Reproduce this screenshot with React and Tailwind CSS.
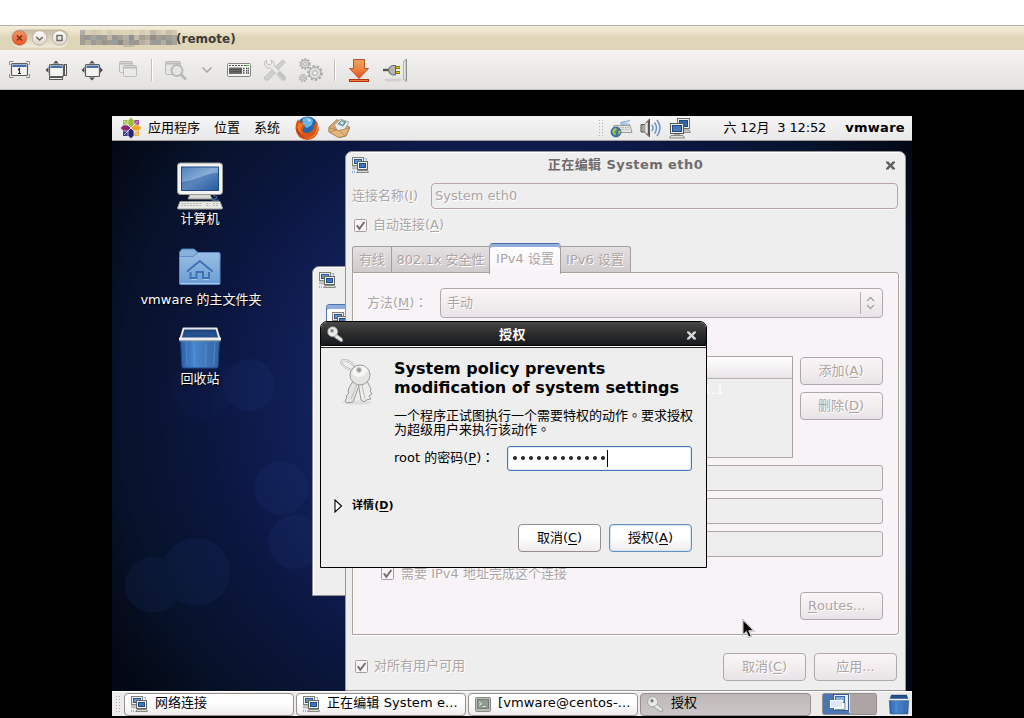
import React from "react";

const U = ({ children }) => (
  <span className="underline decoration-1 underline-offset-2">{children}</span>
);

/* full-width punctuation centred in its cell */
const P = ({ children }) => <span className="leading-none [font-family:'Noto_Sans_CJK_TC',sans-serif]">{children}</span>;

/* ---------- small icons ---------- */

const NetIcon = ({ className = "" }) => (
  <svg width="17" height="17" viewBox="0 0 17 17" className={`shrink-0 ${className}`}>
    <rect x="0.5" y="0.5" width="11" height="8" fill="#eeeeec" stroke="#7e807c" />
    <rect x="2.5" y="2.5" width="7" height="4" fill="#6b95d0" stroke="#2b5490" />
    <path d="M1 9h5v3H0v-1z" fill="#c5c6c0" stroke="#9c9e99" strokeWidth=".5" />
    <path d="M12.500 1.500h2v2M.5 14v2M2.500 14v2M4.500 15v1" stroke="#8fb1e2" fill="none" />
    <rect x="5.5" y="4.5" width="10" height="8" fill="#f1f1ef" stroke="#636561" />
    <rect x="7.5" y="6.5" width="6" height="4" fill="#4377bd" stroke="#204a87" />
    <path d="M6 13.500h9.500l1 2H5z" fill="#d3d7cf" stroke="#8a8c87" />
  </svg>
);

const KeyIcon = ({ className = "" }) => (
  <svg width="17" height="17" viewBox="0 0 17 17" className={`shrink-0 ${className}`}>
    <path d="M9 7.800l6.300 4.700.5 2.700-2.200.6-.8-1.200-1.600-.2-.4-1.400-1.300-.1-3-2.600z" fill="#e8e8e6" stroke="#8d8d8a" strokeWidth=".7" />
    <circle cx="5.7" cy="5.800" r="5" fill="#e9e9e7" stroke="#999996" strokeWidth=".8" />
    <circle cx="5" cy="4.800" r="1.700" fill="#777775" stroke="#bdbdba" strokeWidth=".6" />
  </svg>
);

const CloseX = ({ color, className = "" }) => (
  <svg width="9" height="9" viewBox="0 0 9 9" className={`shrink-0 ${className}`}>
    <path d="M0 .5h2.4L4.5 2.9 6.6.5H9v1.2L6.3 4.5 9 7.3v1.2H6.6L4.5 6.1 2.4 8.5H0V7.3l2.7-2.8L0 1.7z" fill={color} />
  </svg>
);

const Check = ({ className = "" }) => (
  <svg width="13" height="13" viewBox="0 0 13 13" className={`shrink-0 ${className}`}>
    <rect x=".5" y=".5" width="12" height="12" rx="1" fill="#f8f4f7" stroke="#a79c9f" />
    <path d="M2.8 6.3l2.5 3.6L10.4 3" stroke="#77706f" strokeWidth="2" fill="none" />
  </svg>
);

const TerminalIcon = () => (
  <svg width="16" height="15" viewBox="0 0 16 15" className="shrink-0">
    <rect x=".5" y=".5" width="15" height="14" rx="1" fill="#babdb6" stroke="#888a85" />
    <rect x="2.5" y="2.5" width="11" height="9" fill="#8f9a91" stroke="#747d76" />
    <path d="M4.2 5l2.4 1.700-2.400 1.700" stroke="#eeeeec" fill="none" />
    <path d="M7.500 9.500h3.500" stroke="#cfe3cf" />
  </svg>
);

const TrashIcon = ({ size }) => (
  <svg width={size} height={size} viewBox="0 0 44 44" className="shrink-0">
    <defs>
      <linearGradient id="tb" x1="0" x2="1"><stop offset="0" stopColor="#2a5fa8" /><stop offset=".35" stopColor="#4686cf" /><stop offset="1" stopColor="#3465a4" /></linearGradient>
    </defs>
    <path d="M2.500 13h39L40 40.500q0 1.500-2 1.500H6q-2 0-2-1.500z" fill="url(#tb)" stroke="#234c87" />
    <path d="M8 16l1 23M16 17l.3 23M28 17l-.3 23M37 16l-1.500 23" stroke="#699fdc" strokeWidth="1" opacity=".55" />
    <path d="M5.500 2.500h33l3 10.500h-39z" fill="#20467d" stroke="#e8e8e6" strokeWidth="2" strokeLinejoin="round" />
    <path d="M5 12.500L7.500 6h29l2.500 6.500z" fill="#24508d" />
    <path d="M1 13h42" stroke="#eeeeec" strokeWidth="3" />
    <path d="M1 15h42" stroke="#90928f" strokeWidth=".8" />
  </svg>
);

/* ---------- desktop icons ---------- */

const ComputerIcon = () => (
  <svg width="48" height="48" viewBox="0 0 48 48">
    <defs>
      <linearGradient id="scr" x1="0" y1="0" x2="1" y2="1"><stop offset="0" stopColor="#5080bd" /><stop offset=".5" stopColor="#8aaed6" /><stop offset="1" stopColor="#2a60a5" /></linearGradient>
    </defs>
    <path d="M37 34c5-1 5 3 1 3s-1 3 5 1" fill="none" stroke="#3a6094" strokeWidth="1.400" />
    <path d="M14 32h20l2 5H12z" fill="#d7d8d4" stroke="#8a8c87" />
    <rect x="1.500" y="1" width="45" height="31.500" rx="3" fill="#f2f2f0" stroke="#9a9c97" />
    <rect x="5.500" y="5" width="37" height="23.500" fill="url(#scr)" stroke="#204a87" />
    <path d="M6 20c16-2 20-8 36-9v17H6z" fill="#1f559b" opacity=".45" />
    <path d="M4 39.500h40l2.500 6.500q0 1-1 1h-43q-1 0-1-1z" fill="#e8e8e4" stroke="#9a9c97" />
    <path d="M5.500 41.500h21M5 43.500h21M30 41.500h4M37 41.500h6M30 43.500h4M37 43.500h6" stroke="#b4b6b1" strokeDasharray="2 1" />
  </svg>
);

const HomeFolderIcon = () => (
  <svg width="42" height="38" viewBox="0 0 42 38">
    <defs>
      <linearGradient id="fo" x1="0" y1="0" x2="0" y2="1"><stop offset="0" stopColor="#9bbfe6" /><stop offset="1" stopColor="#6a9dd3" /></linearGradient>
    </defs>
    <path d="M.5 9V4L3 1h12l4.500 4h19.500q2 0 2 2v5H.5z" fill="#8ab1de" stroke="#4b7ebb" />
    <path d="M.5 9.500q0-1 1-1H14l5-4h20.500q1.500 0 1.500 1V35.500q0 1-1 1h-38.500q-1 0-1-1z" fill="url(#fo)" stroke="#5a8cc8" />
    <path d="M1.500 35.500h39" stroke="#a9c8ea" />
    <path d="M8 23.500L20.800 13 33.600 23.500M11.500 24v6h6v-6h6.500v6h6V24" fill="none" stroke="#3f73b4" strokeWidth="2" />
    <path d="M12.500 31.500h5.500M24 31.500h6" stroke="#a9c8ea" />
  </svg>
);

const DesktopItem = ({ children, label, className = "" }) => (
  <div className={`flex w-[176px] flex-col items-center ${className}`}>
    {children}
    <div className="whitespace-nowrap text-[13px] leading-[18px] text-white [text-shadow:1px_1px_1px_#000]">{label}</div>
  </div>
);

/* ---------- top panel icons ---------- */

const CentosIcon = () => (
  <svg width="22" height="22" viewBox="0 0 22 22" className="shrink-0">
    <rect x="3" y="3" width="7.500" height="7.500" fill="#a3c34a" />
    <rect x="11.500" y="3" width="7.500" height="7.500" fill="#a24a93" />
    <rect x="3" y="11.500" width="7.500" height="7.500" fill="#3b3a8c" />
    <rect x="11.500" y="11.500" width="7.500" height="7.500" fill="#eeb04a" />
    <g stroke="#f4f4f4" strokeWidth=".7">
      <path d="M11 .3l3 3V8l-3 3-3-3V3.300z" fill="#9bbf2f" />
      <path d="M21.700 11l-3 3H14l-3-3 3-3h4.700z" fill="#efa724" />
      <path d="M11 21.700l-3-3V14l3-3 3 3v4.700z" fill="#262577" />
      <path d="M.3 11l3-3H8l3 3-3 3H3.300z" fill="#932279" />
    </g>
    <path d="M4 4l14 14M18 4L4 18" stroke="#f4f4f4" strokeWidth=".7" />
  </svg>
);

const FirefoxIcon = () => (
  <svg width="24" height="24" viewBox="0 0 24 24" className="shrink-0">
    <circle cx="12.500" cy="11" r="10.500" fill="#2567ad" />
    <path d="M8 2q6-2 10 2l-1 5-5 3-5-3z" fill="#67b6e8" />
    <path d="M12 2l4 2-2 2z" fill="#c9e7fa" />
    <path d="M20.500 4q4 5 3 10.500-2 9-11.500 9.500Q1.500 23 .5 12.500.3 7 3 3.200L4.500 6q2-1 4-.2L7 8l3.500 1.500-2.200 2-.6 3.200q2 3.300 6 2 4.500-2 5-5 .5-2-.3-3.500l1.800 1.300q.8-2.500.3-5.500z" fill="#d9541a" />
    <path d="M21.500 6q2.500 5 .2 10-3 6.500-10 6.500 8-2 9.800-8 1-4 0-8.500z" fill="#f8a52b" />
    <path d="M2.500 12q1 7 7.500 9.500Q3 20 1.500 13z" fill="#a82a16" />
    <path d="M3.500 7l4.500 1.500-2 3q-1 4 2 6.500-5-2-5.500-6z" fill="#ee7a22" />
  </svg>
);

const MailIcon = () => (
  <svg width="23" height="20" viewBox="0 0 23 20" className="shrink-0">
    <path d="M1 9l8-7.500 13 8-4 8.500-7 1.500L1 14z" fill="#d7a66a" stroke="#96703d" strokeWidth=".8" />
    <path d="M6.500 7l6-6 8.500 3-4.500 8-7 1z" fill="#e6ecef" stroke="#999" strokeWidth=".8" />
    <path d="M10 6l3.500-3.500 4.500 1.500-3 4z" fill="#7faccc" stroke="#557891" strokeWidth=".8" />
    <circle cx="14" cy="5" r="1.400" fill="#e6efb1" />
    <path d="M1 10l10 2.500 10.500-2.500-4 8-7 1.500L1 14z" fill="#e2b77d" stroke="#ac834d" strokeWidth=".8" />
    <path d="M1.500 14l7-2M17 17.500L11.500 13" stroke="#ac834d" strokeWidth=".8" />
  </svg>
);

const ImeIcon = () => (
  <svg width="23" height="20" viewBox="0 0 23 20" className="shrink-0">
    <path d="M20 7c-1-3-10 1-9-2 0-2 6 0 9-3" fill="none" stroke="#8fb4dc" strokeWidth="1.500" />
    <path d="M4 7.500h16l2 7H2z" fill="#e4e5e1" stroke="#9a9c97" />
    <path d="M5 9.500h14M5 11.500h15" stroke="#b4b6b0" strokeDasharray="1.500 1" />
    <circle cx="6" cy="14" r="5" fill="#3c70b4" stroke="#284e80" strokeWidth=".7" />
    <path d="M3 11l3-1.500 1 2.500-2 1.500 1 3-2 1-2-4zM8 13l2.500-1v3L8.500 17z" fill="#9cc04f" />
  </svg>
);

const VolumeIcon = () => (
  <svg width="22" height="20" viewBox="0 0 22 20" className="shrink-0">
    <path d="M1 6.500h3.500L9.500 1v18l-5-5H1z" fill="#a6a8a3" stroke="#555753" />
    <path d="M6.500 5v10" stroke="#eeeeec" strokeWidth="2" />
    <path d="M8.500 3v14" stroke="#555753" />
    <path d="M12 7q2 3 0 6M14.500 4.500q4 5.500 0 11M17 2q6 8 0 16" fill="none" stroke="#6c93c7" strokeWidth="1.500" />
  </svg>
);

const NetworkPairIcon = () => (
  <svg width="22" height="21" viewBox="0 0 22 21" className="shrink-0">
    <rect x="8.500" y=".5" width="12" height="10" fill="#eeeeec" stroke="#70726e" />
    <rect x="10.500" y="2.500" width="8" height="6" fill="#3465a4" stroke="#204a87" />
    <path d="M10 12h10l1.500 2.500h-10z" fill="#d3d7cf" stroke="#888a85" />
    <rect x="1.500" y="5.500" width="13" height="10" fill="#eeeeec" stroke="#555753" />
    <rect x="3.500" y="7.500" width="9" height="6" fill="#4678bd" stroke="#204a87" />
    <path d="M5 16h6v2H5z" fill="#a4a6a1" />
    <path d="M2 17.500h12l1.500 2.500H.5z" fill="#e3e4e0" stroke="#888a85" />
  </svg>
);

const Grip = ({ h }) => (
  <svg width="5" height={h} viewBox={`0 0 5 ${h}`} className="shrink-0" shapeRendering="crispEdges">
    <path d={`M.5 0v${h}`} stroke="#b5b0b0" strokeDasharray="1 2" />
    <path d={`M3.500 0v${h}`} stroke="#b5b0b0" strokeDasharray="1 2" />
  </svg>
);

/* ---------- viewer toolbar ---------- */

const MOSAIC = [
  ["#aeb0a8", "#d9cfb5", "#cfc7b1", "#d6cdb3", "#dfd5b8", "#d2cab4", "#dcd3b7", "#d9d0b6", "#ddd3b6", "#d8cfb6", "#e0d6b9", "#d6cdb5", "#dcd2b7", "#bdb9a9", "#cfc7b3", "#d9d0b8", "#c5c0ae", "#d0c8b4"],
  ["#a19c92", "#969797", "#a8a59a", "#959c9a", "#a39b8f", "#bdb7a6", "#9a9791", "#a5a197", "#b5aea0", "#8d9294", "#c4bca8", "#a59e94", "#b3ac9c", "#918e87", "#a49e93", "#969896", "#a39c90", "#a9a69c"],
  ["#a29d92", "#b6b09f", "#989b99", "#aaa295", "#969590", "#a29e93", "#979e9f", "#918b83", "#b0aa9c", "#979b99", "#a0978a", "#b3b0a3", "#c1baa8", "#9f9b92", "#969c9a", "#b3ab9b", "#969590", "#a0a49f"],
];

const Mosaic = () => (
  <svg width="97" height="17" viewBox="0 0 97 17" className="shrink-0" shapeRendering="crispEdges">
    {MOSAIC.map((row, y) =>
      row.map((c, x) => <rect key={`${x}-${y}`} x={x * 5.400} y={y * 5} width="5.500" height="5" fill={c} />)
    )}
    <path d="M43 15h11v2H43z" fill="#c3bba6" />
  </svg>
);

const WinButtons = () => (
  <svg width="60" height="19" viewBox="0 0 60 19" className="shrink-0">
    <defs>
      <linearGradient id="pill" x1="0" y1="0" x2="0" y2="1"><stop offset="0" stopColor="#c4b9a0" /><stop offset="1" stopColor="#f1ebdb" /></linearGradient>
      <linearGradient id="wb" x1="0" y1="0" x2="0" y2="1"><stop offset="0" stopColor="#fff" /><stop offset="1" stopColor="#d9d4ca" /></linearGradient>
      <linearGradient id="wo" x1="0" y1="0" x2="0" y2="1"><stop offset="0" stopColor="#f4946d" /><stop offset="1" stopColor="#e95420" /></linearGradient>
    </defs>
    <rect x=".5" y=".5" width="59" height="18" rx="9" fill="url(#pill)" />
    <circle cx="9.500" cy="9" r="7.300" fill="url(#wo)" stroke="#b97255" strokeWidth=".8" />
    <path d="M7 6.500l5 5M12 6.500l-5 5" stroke="#7a2e15" strokeWidth="1.500" />
    <circle cx="29.500" cy="9" r="7.300" fill="url(#wb)" stroke="#b4ab98" strokeWidth=".8" />
    <path d="M26.200 8l3.300 3 3.300-3" fill="none" stroke="#6c6960" strokeWidth="1.500" />
    <circle cx="49.500" cy="9" r="7.300" fill="url(#wb)" stroke="#b4ab98" strokeWidth=".8" />
    <rect x="47" y="6.500" width="5" height="5" fill="none" stroke="#6c6960" strokeWidth="1.400" />
  </svg>
);

const Screen = ({ x, y, w, h }) => (
  <g>
    <rect x={x + 0.5} y={y + 0.5} width={w - 1} height={h - 1} rx="1" fill="#f3f3f1" stroke="#5c5e5a" strokeWidth="1.200" />
    <rect x={x + 1.500} y={y + 1.500} width={w - 3} height="2.500" fill="#4a70aa" />
  </g>
);

const ToolbarIcons = () => (
  <svg width="420" height="38" viewBox="0 51 420 38" className="shrink-0">
    <defs>
      <linearGradient id="dl" x1="0" y1="0" x2="0" y2="1"><stop offset="0" stopColor="#e9a560" /><stop offset=".5" stopColor="#ee8541" /><stop offset="1" stopColor="#e24d17" /></linearGradient>
    </defs>
    {/* fullscreen */}
    <path d="M9.500 65v-3.500h4M26 61.500h3.500V65M29.500 74v3.500H26M13.500 77.500h-4V74" fill="none" stroke="#8b8d88" />
    <Screen x={11} y={63} w={17} h={13} />
    <path d="M18 70l1.500-1.500V73.500M18 73.500h3" fill="none" stroke="#222" strokeWidth="1.100" />
    {/* scaling */}
    <Screen x={49} y={64} w={15} h={13} />
    <path d="M53 63.500l3-3 3 3zM48.500 67l-3 3 3 3z" fill="#4f514e" />
    <rect x="64.500" y="64.500" width="2" height="11" fill="#eee" stroke="#555753" />
    <rect x="49.500" y="77.500" width="13" height="2" fill="#eee" stroke="#555753" />
    {/* resize */}
    <Screen x={85} y={64} w={15} h={13} />
    <path d="M89 63.500l3-3 3 3zM89 77.500l3 3 3-3zM84.500 67l-3 3 3 3zM100 67l3 3-3 3z" fill="#4f514e" />
    {/* duplicate */}
    <g fill="#e9e9e7" stroke="#bcbcba">
      <rect x="119.500" y="61.500" width="13" height="11" rx="1" />
      <path d="M120 63.500h12" strokeWidth="2" />
      <rect x="123.500" y="65.500" width="13" height="11" rx="1" />
      <path d="M124 67.500h12" strokeWidth="2" />
    </g>
    <path d="M151.500 59v22" stroke="#c1bfbb" /><path d="M152.500 59v22" stroke="#fff" />
    {/* search window */}
    <g fill="#e5e5e3" stroke="#bababa">
      <rect x="165.500" y="61.500" width="15" height="13" rx="1" />
      <path d="M166 63.500h15" strokeWidth="2" />
      <circle cx="177" cy="70.500" r="5.500" strokeWidth="2" />
      <path d="M181 74.500l4 4" strokeWidth="3" strokeLinecap="round" />
    </g>
    <path d="M202.500 67.500l4.500 4.500 4.500-4.500" fill="none" stroke="#a4a4a2" strokeWidth="1.500" />
    {/* keyboard */}
    <rect x="227.500" y="63.500" width="23" height="13" rx="1" fill="#f4f4f2" stroke="#858783" />
    <path d="M229 65.500h20" stroke="#555753" strokeDasharray="2 1" />
    <rect x="229" y="67.500" width="13" height="6.500" fill="#6a6c69" />
    <path d="M229 69.500h13M229 71.700h13" stroke="#3c3e3b" strokeDasharray="1.200 1" />
    <path d="M243 68.500h2M243 70.700h2M243 73h2M246 68.500h3M246 70.700h3M246 73h3" stroke="#4c4e4b" strokeWidth="1.500" strokeDasharray="1.500 .5" />
    <path d="M246 65.500h3" stroke="#58a23c" />
    {/* tools */}
    <path d="M265.500 80q-2-1-1-3l18-17 3 2-16 17q-1.500 2-4 1z" fill="#cfcfcd" stroke="#bdbdbb" strokeWidth=".8" />
    <path d="M266 60l1 4 3 1 2-2-1-3 3 2 .5 4 10 10q1.500 2-.5 3.500t-3 0l-10-11-4-.5-3-4z" fill="#e9e9e7" stroke="#b9b9b7" strokeWidth=".8" />
    <path d="M279.500 73.500l4.500 5" stroke="#c2c2c0" strokeWidth="4" strokeLinecap="round" />
    {/* gears */}
    <g fill="#dededc" stroke="#adadab">
      <circle cx="305" cy="64" r="4.700" strokeWidth="2" strokeDasharray="1.800 1.200" />
      <circle cx="305" cy="64" r="3.800" /><circle cx="305" cy="64" r="1.500" fill="#f4f4f2" />
      <circle cx="315" cy="73" r="6.800" strokeWidth="2.200" strokeDasharray="2.400 1.800" />
      <circle cx="315" cy="73" r="5.700" /><circle cx="315" cy="73" r="2.300" fill="#f4f4f2" />
      <circle cx="303" cy="78" r="3.200" strokeWidth="2" strokeDasharray="1.500 1" />
      <circle cx="303" cy="78" r="1.300" fill="#f4f4f2" />
    </g>
    <path d="M334.500 59v22" stroke="#c1bfbb" /><path d="M335.500 59v22" stroke="#fff" />
    {/* download */}
    <path d="M353.500 59.500h11v9h4L359 78.500l-9.500-10h4z" fill="url(#dl)" stroke="#ba542b" />
    <rect x="349.500" y="79.500" width="19" height="2" fill="#f0803f" stroke="#b43008" />
    {/* plug */}
    <ellipse cx="393" cy="80" rx="9" ry="1.600" fill="#cfcfcd" />
    <path d="M383 70h6" stroke="#555753" strokeWidth="2.400" />
    <path d="M388.500 70q0-3.500 4-4.500h3v9.500h-3q-4-1-4-5z" fill="#b2b4af" stroke="#666864" />
    <path d="M396 67.500h4M396 72.500h4" stroke="#8c7500" strokeWidth="2.800" />
    <path d="M396.500 67.500h3M396.500 72.500h3" stroke="#edd400" strokeWidth="1.200" />
    <path d="M406.500 59.500h-1q-1 0-1 2h-1v18h1q0 2 1 2h1z" fill="#e4e7e1" stroke="#b0b4ad" />
    <path d="M406.300 59v22" stroke="#7e827b" />
  </svg>
);

/* ---------- form pieces ---------- */

const dis = "text-[#ada4a4] [text-shadow:1px_1px_0_#fff]";
const disBtn =
  "flex items-center rounded-[4px] border border-[#b1a8ac] bg-linear-to-b from-[#f9f5f8] via-[#f2eeee] to-[#e8e3e7] text-[#ada4a4] [text-shadow:1px_1px_0_#fff]";

const Tab = ({ className, children }) => (
  <div className={`mt-[3px] flex h-[26px] items-center justify-center border border-b-0 border-[#a59f9b] bg-linear-to-b from-[#e4dfe0] to-[#cfcacb] ${className}`}>
    {children}
  </div>
);

const Field = () => <div className="h-[26px] rounded-[3px] border border-[#b0a8a8] bg-[#eeeeee]" />;

const EditWindow = () => (
  <div className="absolute left-[233px] top-[35px] flex h-[540px] w-[561px] flex-col rounded-t-[7px] border border-[#969696] bg-[#eeeeee] px-[6px] shadow-[inset_0_1px_0_#fff]">
    <div className="flex h-[25px] shrink-0 items-center">
      <NetIcon className="mt-[2px]" />
      <div className="flex-1 pr-[4px] text-center text-[13px] font-bold tracking-[0.42px] text-[#6e6c6c]">正在编辑 System eth0</div>
      <CloseX color="#5f5d5d" className="mr-[4px] mt-[2px]" />
    </div>

    <div className={`mt-[6px] flex h-[26px] items-center ${dis}`}>
      <div className="w-[79px]">连接名称(<U>I</U>)</div>
      <div className="mr-[1px] flex h-[26px] flex-1 items-center rounded-[4px] border border-[#b5a5a8] pb-[1px] pl-[3px] shadow-[0_1px_0_#fff]">System eth0</div>
    </div>

    <div className={`mt-[7px] flex h-[18px] items-center gap-[6px] pl-[2px] ${dis}`}>
      <Check />
      <span>自动连接(<U>A</U>)</span>
    </div>

    <div className={`mt-[9px] flex h-[29px] whitespace-nowrap ${dis}`}>
      <Tab className="w-[40px] rounded-tl-[3px]">有线</Tab>
      <Tab className="w-[97px] border-l-0 border-r-0">802.1x 安全性</Tab>
      <div className="relative z-10 flex h-[31px] w-[72px] items-center justify-center rounded-t-[4px] border border-b-0 border-[#a59f9b] border-t-[#4a6fa9] bg-linear-to-b from-white to-[#f7f3f7] shadow-[inset_0_3px_0_#92aedd]">
        IPv4 设置
      </div>
      <Tab className="w-[70px] rounded-tr-[3px] border-l-0 pr-[1px]">IPv6 设置</Tab>
    </div>

    <div className="flex h-[363px] w-[547px] flex-col rounded-r-[3px] border border-[#a7a39d] bg-[#f7f3f7] pl-[14px] pr-[15px] pt-[15px] shadow-[inset_1px_1px_0_#fff,1px_1px_0_#fff]">
      <div className="flex h-[30px] items-center">
        <div className={`w-[73px] whitespace-nowrap ${dis}`}>方法(<U>M</U>)<P>：</P></div>
        <div className={`h-[30px] flex-1 pb-[1px] pl-[6px] pr-[7px] ${disBtn}`}>
          <span className="flex-1">手动</span>
          <span className="mr-[5px] h-[22px] w-px bg-[#b5adae]" />
          <svg width="9" height="14" viewBox="0 0 9 14"><path d="M1 5l3.500-3.500L8 5M1 9l3.500 3.500L8 9" fill="none" stroke="#a9a2a2" strokeWidth="1.300" /></svg>
        </div>
      </div>

      <div className="mt-[38px] flex h-[102px] gap-[7px]">
        <div className="flex flex-1 flex-col border border-[#aba6a2] bg-[#eeeeee]">
          <div className="h-[22px] border-b border-[#b3adab] bg-linear-to-b from-white to-[#e9e4e8]" />
          <div className="pr-[68px] pt-[2px] text-right text-white">1.1</div>
        </div>
        <div className="flex w-[83px] flex-col gap-[7px] pt-[1px]">
          <div className={`h-[28px] justify-center pb-[1px] pr-[1px] ${disBtn}`}>添加(<U>A</U>)</div>
          <div className={`h-[28px] justify-center pb-[1px] pr-[1px] ${disBtn}`}>删除(<U>D</U>)</div>
        </div>
      </div>

      <div className="mt-[7px] flex flex-col gap-[7px]">
        <Field />
        <Field />
        <Field />
      </div>

      <div className={`mt-[8px] flex h-[18px] items-center gap-[7px] pb-[1px] pl-[14px] ${dis}`}>
        <Check />
        <span>需要 IPv4 地址完成这个连接</span>
      </div>

      <div className={`mt-[9px] h-[28px] w-[83px] self-end pb-[1px] pl-[7px] ${disBtn}`}><U>R</U>outes...</div>
    </div>

    <div className="mt-[18px] flex h-[28px] items-center pl-[3px] pr-[2px]">
      <Check className="mb-[1px] mr-[6px]" />
      <span className={`flex-1 pb-[2px] ${dis}`}>对所有用户可用</span>
      <div className={`mr-[8px] h-[28px] w-[83px] justify-center pb-[1px] ${disBtn}`}>取消(<U>C</U>)</div>
      <div className={`h-[28px] w-[83px] justify-center pb-[1px] ${disBtn}`}>应用...</div>
    </div>
  </div>
);

const BackWindow = () => (
  <div className="absolute left-[200px] top-[150px] flex h-[330px] w-[60px] flex-col rounded-tl-[7px] border border-[#8f8f8f] bg-[#eeeeee] shadow-[inset_1px_1px_0_#fff]">
    <NetIcon className="ml-[6px] mt-[5px]" />
    <div className="ml-[13px] mt-[15px] h-[60px] w-[46px] rounded-tl-[3px] border border-[#4d75b1] bg-white pl-[5px] pt-[7px] shadow-[inset_0_4px_0_#8eaee2]">
      <NetIcon />
    </div>
  </div>
);

const KeysIcon = () => (
  <svg width="34" height="46" viewBox="0 0 34 46" className="shrink-0">
    <ellipse cx="17" cy="43.500" rx="15" ry="2" fill="#dededc" />
    <ellipse cx="8" cy="6" rx="7.500" ry="3.500" transform="rotate(30 8 6)" fill="none" stroke="#b2b2b0" strokeWidth="2.200" />
    <ellipse cx="8" cy="6" rx="7.500" ry="3.500" transform="rotate(30 8 6)" fill="none" stroke="#eee" strokeWidth="1" />
    <path d="M13 22l-4 7-1 4 1 1-3 3 1 1-2 4 2 2 6-1 7-19z" fill="#e4e4e2" stroke="#9a9a98" />
    <path d="M18 23l3 18 3 2 2-2 5-1-2-3 3-2-2-3 1-2-4-8z" fill="#ededeb" stroke="#9a9a98" />
    <circle cx="20" cy="16" r="10" fill="#e4e4e2" stroke="#9a9a98" />
    <path d="M12 15q8 7 16-3-1-5-8-5-7 1-8 8z" fill="#f6f6f5" />
    <circle cx="19" cy="11" r="2.400" fill="#999997" stroke="#c8c8c6" />
    <path d="M17 25l-6 15M22 26l3 14" stroke="#bdbdbb" />
  </svg>
);

const AuthDialog = () => (
  <div className="absolute left-[208px] top-[205px] flex h-[247px] w-[387px] flex-col rounded-t-[7px] border border-black bg-[#eeeeee] text-black">
    <div className="flex h-[24px] shrink-0 items-center rounded-t-[6px] border-b border-black bg-linear-to-b from-[#484848] via-[#2c2c2c] to-[#171c20] px-[6px] shadow-[0_1px_0_#fff,0_2px_0_#222]">
      <KeyIcon className="mt-[2px]" />
      <div className="flex-1 pr-[6px] pt-[3px] text-center text-[13px] font-bold tracking-[0.6px] text-white">授权</div>
      <CloseX color="#d8d8d8" className="mr-[4px] mt-[3px]" />
    </div>
    <div className="flex pl-[19px] pt-[13px]">
      <KeysIcon />
      <div className="ml-[20px] w-[306px] whitespace-nowrap">
        <div className="text-[16px] font-bold leading-[19px]">
          <div>System policy prevents</div>
          <div>modification of system settings</div>
        </div>
        <div className="mt-[11px] text-[13px]">
          <div className="h-[14px] leading-[14px]">一个程序正试图执行一个需要特权的动作<P>。</P>要求授权</div>
          <div className="h-[14px] leading-[14px]">为超级用户来执行该动作<P>。</P></div>
        </div>
        <div className="mt-[9px] flex h-[26px] items-center">
          <div className="h-[18px] w-[113px]">root 的密码(<U>P</U>)<P>：</P></div>
          <div className="flex h-[25px] w-[185px] items-center rounded-[3px] border border-[#4a76b4] bg-white pl-[4px] shadow-[inset_0_0_0_1px_#dfe8f5]">
            <svg width="96" height="18" viewBox="0 0 96 18">
              {Array.from({ length: 12 }, (_, i) => <circle key={i} cx={3 + i * 8} cy="9" r="2" fill="#222" />)}
              <path d="M95.500 1v17" stroke="#000" />
            </svg>
          </div>
        </div>
      </div>
    </div>
    <div className="mt-[26px] flex h-[18px] items-center pl-[13px]">
      <svg width="9" height="14" viewBox="0 0 9 14" className="mr-[9px]"><path d="M1 1l6.500 6L1 13z" fill="#fff" stroke="#000" strokeWidth="1.100" /></svg>
      <span className="text-[11px] font-bold tracking-[0.1px]">详情(<U>D</U>)</span>
    </div>
    <div className="mt-[9px] flex justify-end gap-[8px] pr-[14px]">
      <div className="flex h-[28px] w-[83px] items-center justify-center rounded-[4px] border border-[#968c8c] bg-linear-to-b from-white from-50% to-[#eeebeb] pb-[1px]">取消(<U>C</U>)</div>
      <div className="flex h-[28px] w-[83px] items-center justify-center rounded-[4px] border border-[#6590c3] bg-linear-to-b from-white from-50% to-[#eeebeb] pb-[1px] shadow-[inset_0_0_0_1px_#d5e2f2]">授权(<U>A</U>)</div>
    </div>
  </div>
);

const Task = ({ icon, children, active, className }) => (
  <div
    className={`flex h-[23px] items-center gap-[7px] overflow-hidden whitespace-nowrap rounded-[4px] border border-[#988e8e] pl-[6px] text-black ${
      active ? "bg-linear-to-b from-[#beb8b8] to-[#ccc7c6]" : "bg-linear-to-b from-white from-40% to-[#efecec]"
    } ${className}`}
  >
    {icon}
    <span className="pb-[3px]">{children}</span>
  </div>
);

const Wallpaper = () => (
  <svg width="800" height="551" viewBox="0 0 800 551" className="absolute left-0 top-[25px]">
    <defs>
      <radialGradient id="wall" gradientUnits="userSpaceOnUse" cx="400" cy="260" r="470">
        <stop offset="0" stopColor="#1c3884" />
        <stop offset=".38" stopColor="#12235f" />
        <stop offset=".62" stopColor="#0c1743" />
        <stop offset=".84" stopColor="#07122b" />
        <stop offset="1" stopColor="#030914" />
      </radialGradient>
    </defs>
    <rect width="800" height="551" fill="url(#wall)" />
    <g fill="#3158ac" opacity=".09">
      <circle cx="137" cy="244" r="26" />
      <circle cx="169" cy="347" r="27" />
      <circle cx="183" cy="401" r="27" />
      <circle cx="84" cy="431" r="34" />
      <circle cx="41" cy="444" r="28" />
      <circle cx="92" cy="246" r="32" opacity=".4" />
    </g>
  </svg>
);

const Desktop = () => (
  <div className="relative flex h-[601px] w-[800px] flex-col overflow-hidden">
    <Wallpaper />

    <div className="relative z-10 flex h-[25px] shrink-0 items-center border-b border-[#a49d9a] bg-linear-to-b from-[#f5f5f5] to-[#e9e9e9] pl-[8px] pr-[7px] text-black">
      <CentosIcon />
      <div className="ml-[6px] flex gap-[14px] whitespace-nowrap">
        <span>应用程序</span>
        <span>位置</span>
        <span>系统</span>
      </div>
      <div className="ml-[15px] flex flex-1 items-center gap-[9px]">
        <FirefoxIcon />
        <MailIcon />
      </div>
      <Grip h={17} />
      <div className="ml-[6px] flex items-center gap-[7px]">
        <ImeIcon />
        <VolumeIcon />
        <NetworkPairIcon />
      </div>
      <span className="ml-[32px] whitespace-pre tracking-[-0.15px]">六 12月  3 12:52</span>
      <span className="ml-[19px] font-bold tracking-[0.3px]">vmware</span>
    </div>

    <div className="relative flex flex-1 flex-col">
      <DesktopItem label="计算机" className="pt-[21px]"><ComputerIcon /></DesktopItem>
      <DesktopItem label={<>vmware 的主文件夹</>} className="pl-[2px] pt-[20px]"><div className="mb-[5px] h-[38px] pr-[2px]"><HomeFolderIcon /></div></DesktopItem>
      <DesktopItem label="回收站" className="pt-[17px]"><TrashIcon size={44} /></DesktopItem>
    </div>

    <BackWindow />
    <EditWindow />
    <AuthDialog />

    <svg width="14" height="20" viewBox="0 0 14 20" className="absolute left-[630px] top-[503px]">
      <path d="M1 1v14.500l3.300-3 2.500 5.500 2.400-1-2.500-5.300h4.700z" fill="#000" stroke="#aaa" strokeWidth="1.600" />
      <path d="M1 1v14.500l3.300-3 2.500 5.500 2.400-1-2.500-5.300h4.700z" fill="#000" stroke="#fff" strokeWidth=".8" />
    </svg>

    <div className="relative z-10 flex h-[25px] shrink-0 items-center border-t border-white bg-[#ececec] pl-[4px]">
      <Grip h={17} />
      <div className="ml-[3px] flex gap-[2px]">
        <Task className="w-[170px]" icon={<NetIcon />}>网络连接</Task>
        <Task className="w-[170px]" icon={<NetIcon />}><span className="tracking-[0.1px]">正在编辑 System e...</span></Task>
        <Task className="w-[170px]" icon={<TerminalIcon />}><span className="tracking-[0.12px]">[vmware@centos-...</span></Task>
        <Task className="w-[171px]" icon={<KeyIcon />} active>授权</Task>
      </div>
      <svg width="55" height="22" viewBox="0 0 55 22" className="ml-[11px] shrink-0">
        <rect x=".5" y=".5" width="54" height="21" rx="2" fill="#ada5a5" stroke="#968d8d" />
        <path d="M1 1h27v20H1z" fill="#4b78b5" />
        <rect x="11.500" y="1.500" width="15" height="16" fill="#e9eef6" stroke="#24487d" strokeWidth=".8" />
        <rect x="13.500" y="3.500" width="9" height="6" fill="#8aaede" stroke="#3465a4" />
        <rect x="8.500" y="7.500" width="12" height="7" fill="#dce7f7" stroke="#fff" />
        <path d="M13 16.500h10v-7" fill="none" stroke="#8d95a1" />
        <path d="M27.500 1v19" stroke="#dce7f7" />
      </svg>
      <div className="ml-[11px]"><TrashIcon size={22} /></div>
    </div>
    <div className="h-px shrink-0 bg-black" />
  </div>
);

export default function App() {
  return (
    <div className="flex h-[718px] w-[1024px] flex-col overflow-hidden bg-black text-[13px] leading-[18px] [font-family:'DejaVu_Sans','Noto_Sans_CJK_SC',sans-serif]">
      <div className="h-[25px] shrink-0 bg-white" />
      <div className="flex h-[25px] shrink-0 items-center border-t border-[#b5b2ac] bg-linear-to-b from-[#f4eedf] to-[#dfd5b7] to-50% pl-[10px] text-[#3c3b37]">
        <WinButtons />
        <div className="ml-[10px] flex items-center">
          <Mosaic />
          <span className="-ml-px pt-[1px] text-[12px] font-bold leading-[18px]">(remote)</span>
        </div>
      </div>
      <div className="flex h-[40px] shrink-0 items-center border-b border-[#c0beba] bg-linear-to-b from-[#f4f3f2] to-[#e3e2e0]">
        <ToolbarIcons />
      </div>
      <div className="pl-[112px] pt-[26px]">
        <Desktop />
      </div>
    </div>
  );
}
